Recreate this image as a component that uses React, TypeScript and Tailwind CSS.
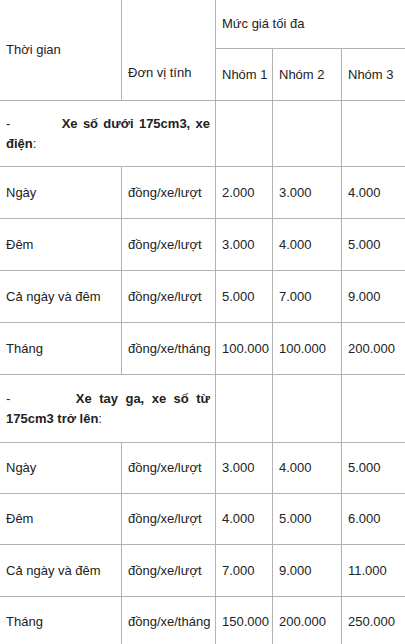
const rows1 = [
  ["Ngày", "đồng/xe/lượt", "2.000", "3.000", "4.000"],
  ["Đêm", "đồng/xe/lượt", "3.000", "4.000", "5.000"],
  ["Cả ngày và đêm", "đồng/xe/lượt", "5.000", "7.000", "9.000"],
  ["Tháng", "đồng/xe/tháng", "100.000", "100.000", "200.000"],
];

const rows2 = [
  ["Ngày", "đồng/xe/lượt", "3.000", "4.000", "5.000"],
  ["Đêm", "đồng/xe/lượt", "4.000", "5.000", "6.000"],
  ["Cả ngày và đêm", "đồng/xe/lượt", "7.000", "9.000", "11.000"],
  ["Tháng", "đồng/xe/tháng", "150.000", "200.000", "250.000"],
];

const cell = "border border-[#b3b3b3] pl-[6px] pr-[2px] align-middle whitespace-nowrap";

function DataRows({ rows, heights }: { rows: string[][]; heights: string[] }) {
  return (
    <>
      {rows.map((r, i) => (
        <tr key={r[0] + i} className={heights[i]}>
          {r.map((c, j) => (
            <td key={j} className={cell}>
              {c}
            </td>
          ))}
        </tr>
      ))}
    </>
  );
}

function Section({ lead, height, gap }: { lead: string; height: string; gap: string }) {
  return (
    <tr className={height}>
      <td colSpan={2} className="border border-[#b3b3b3] pl-[6px] pr-[5px] align-middle">
        <p className="text-justify leading-[20px] [text-align-last:left]">
          -<span className={gap}></span> <b>{lead}</b>:
        </p>
      </td>
      <td className={cell}></td>
      <td className={cell}></td>
      <td className={cell}></td>
    </tr>
  );
}

export default function App() {
  return (
    <div className="h-[644px] w-[405px] overflow-hidden bg-white">
      <table
        className="-ml-px -mt-px w-[412px] table-fixed border-collapse text-[13px] leading-[16px] text-[#222]"
        style={{ fontFamily: '"Liberation Sans", Arial, sans-serif' }}
      >
        <colgroup>
          <col className="w-[122px]" />
          <col className="w-[94px]" />
          <col className="w-[57px]" />
          <col className="w-[69px]" />
          <col />
        </colgroup>
        <tbody>
          <tr className="h-[49px]">
            <td rowSpan={2} className={cell}>
              Thời gian
            </td>
            <td rowSpan={2} className="border border-[#b3b3b3] pl-[6px] pr-[2px] pb-[19px] align-bottom">
              Đơn vị tính
            </td>
            <td colSpan={3} className={cell}>
              Mức giá tối đa
            </td>
          </tr>
          <tr className="h-[52px]">
            <td className={cell}>Nhóm 1</td>
            <td className={cell}>Nhóm 2</td>
            <td className={cell}>Nhóm 3</td>
          </tr>
          <Section lead="Xe số dưới 175cm3, xe điện" height="h-[66px]" gap="inline-block w-[46px]" />
          <DataRows rows={rows1} heights={["h-[52px]", "h-[52px]", "h-[52px]", "h-[52px]"]} />
          <Section lead="Xe tay ga, xe số từ 175cm3 trở lên" height="h-[68px]" gap="inline-block w-[58px]" />
          <DataRows rows={rows2} heights={["h-[51px]", "h-[51px]", "h-[52px]", "h-[51px]"]} />
        </tbody>
      </table>
    </div>
  );
}
